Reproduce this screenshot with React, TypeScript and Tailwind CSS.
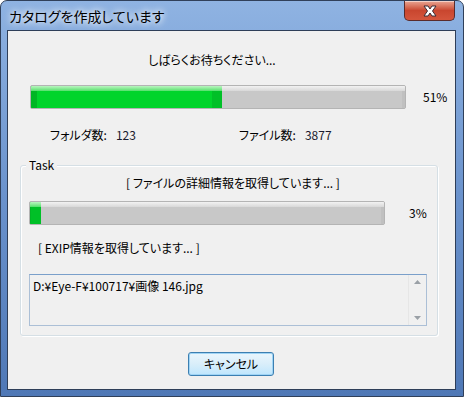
const font = "[font-family:'Noto_Sans_CJK_JP','Noto_Sans',sans-serif] [font-feature-settings:'palt']";

function ProgressBar({ width, percent }: { width: number; percent: number }) {
  return (
    <div
      className="relative h-[24px] rounded-[2px] border border-[#b4b4b4] bg-[#c8c8c8] overflow-hidden shadow-[inset_0_1px_0_#f4f4f4]"
      style={{ width }}
    >
      <div className="absolute inset-x-0 top-0 h-[5px] bg-gradient-to-b from-[#f2f2f2] to-[#d8d8d8]" />
      <div className="absolute right-0 top-[5px] bottom-0 w-[3px] bg-[#c0c0c0]" />
      <div
        className="absolute left-0 top-0 bottom-0 bg-[#00d42b]"
        style={{ width: `${percent}%` }}
      >
        <div className="absolute inset-x-0 top-0 h-[5px] bg-gradient-to-b from-[#b8f5c0] to-[#4fe06a]" />
        <div className="absolute left-0 top-[5px] bottom-0 w-[6px] bg-[#00b624]" />
        <div className="absolute right-0 top-[5px] bottom-0 w-[10px] bg-[#00c027]" />
      </div>
    </div>
  );
}

function CloseButton() {
  return (
    <div className="mr-[8px] flex h-[20px] w-[51px] items-center justify-center rounded-b-[5px] border border-t-0 border-[#5a2b2b] bg-gradient-to-b from-[#e8a593] via-[#c9462f] to-[#d4553c] shadow-[inset_0_1px_0_rgba(255,255,255,0.5)]">
      <svg width="16" height="12" viewBox="0 0 16 12">
        <path
          d="M2 1 L6 1 L8 4 L10 1 L14 1 L10.5 6 L14 11 L10 11 L8 8 L6 11 L2 11 L5.5 6 Z"
          fill="#ffffff"
          stroke="#3a2b35"
          strokeWidth="1"
          strokeLinejoin="round"
        />
      </svg>
    </div>
  );
}

export default function App() {
  return (
    <div
      className={`${font} flex h-[397px] w-[464px] flex-col rounded-t-[7px] border border-[#30405a] bg-gradient-to-b from-[#8fb3e2] via-[#6a92cc] to-[#4f78b6] text-[12px] text-black`}
    >
      {/* Title bar */}
      <div className="flex h-[29px] items-start">
        <div className="pl-[8px] pt-[5px] text-[14px] leading-[20px] text-black [text-shadow:0_0_6px_#ffffff,0_0_10px_#ffffff]">
          カタログを作成しています
        </div>
        <div className="ml-auto">
          <CloseButton />
        </div>
      </div>

      {/* Client area */}
      <div className="ml-[6px] mr-[7px] h-[360px] border border-[#2e3e58] bg-[#f0f0f0]">
        <div className="flex flex-col">
          <div className="ml-[16px] mt-[21px] h-[16px] w-[376px] text-center leading-[16px]">
            しばらくお待ちください...
          </div>

          <div className="ml-[22px] mt-[17px] flex items-center">
            <ProgressBar width={376} percent={51} />
            <div className="ml-[17px] leading-[16px]">51%</div>
          </div>

          <div className="mt-[18px] flex h-[16px] leading-[16px]">
            <div className="ml-[42px] flex w-[189px]">
              <span>フォルダ数:</span>
              <span className="ml-[9px] text-[#1a1a2e]">123</span>
            </div>
            <div className="flex">
              <span>ファイル数:</span>
              <span className="ml-[9px] text-[#1a1a2e]">3877</span>
            </div>
          </div>

          {/* Task group */}
          <div className="relative ml-[12px] mt-[22px] h-[171px] w-[418px] rounded-[3px] border border-[#d5dfe5] shadow-[inset_1px_1px_0_#ffffff,1px_1px_0_#ffffff]">
            <div className="absolute left-[5px] top-[-9px] bg-[#f0f0f0] px-[3px] leading-[16px]">
              Task
            </div>
            <div className="mt-[9px] h-[16px] pl-[8px] text-center leading-[16px]">
              [ ファイルの詳細情報を取得しています... ]
            </div>
            <div className="ml-[8px] mt-[10px] flex items-center">
              <ProgressBar width={356} percent={3} />
              <div className="ml-[24px] leading-[16px]">3%</div>
            </div>
            <div className="ml-[17px] mt-[15px] h-[16px] leading-[16px]">
              [ EXIP情報を取得しています... ]
            </div>
            <div className="ml-[8px] mt-[18px] flex h-[52px] w-[398px] border border-[#abbfd6] border-t-[#7a9fca] bg-[#f0f0f0]">
              <div className="flex-1 pl-[3px] pt-[3px] leading-[16px]">
                D:¥Eye-F¥100717¥画像 146.jpg
              </div>
              <div className="flex w-[18px] flex-col items-center justify-between border-l border-[#e6e6e6] bg-[#f0f0f0] py-[5px]">
                <svg width="7" height="4" viewBox="0 0 7 4">
                  <path d="M0 4 L3.5 0 L7 4 Z" fill="#9aa0a6" />
                </svg>
                <svg width="7" height="4" viewBox="0 0 7 4">
                  <path d="M0 0 L3.5 4 L7 0 Z" fill="#9aa0a6" />
                </svg>
              </div>
            </div>
          </div>

          <div className="ml-[180px] mt-[16px] flex h-[24px] w-[86px] items-center justify-center rounded-[3px] border border-[#3c7fb1] bg-gradient-to-b from-[#eaf6fd] via-[#d9eefa] to-[#bee6fd] leading-[16px] shadow-[inset_0_0_0_1px_#9fd4f5]">
            キャンセル
          </div>
        </div>
      </div>
    </div>
  );
}
